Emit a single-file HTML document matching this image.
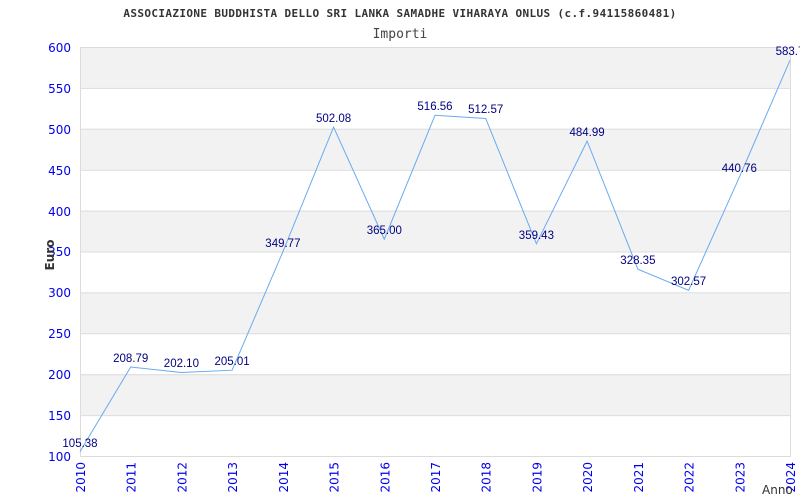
<!DOCTYPE html>
<html><head><meta charset="utf-8"><style>
html,body{margin:0;padding:0;background:#fff;width:800px;height:500px;overflow:hidden}
</style></head><body>
<svg width="800" height="500" xmlns="http://www.w3.org/2000/svg">
<g fill="#f2f2f2">
<rect x="80" y="47" width="710" height="40.9"/>
<rect x="80" y="128.8" width="710" height="40.9"/>
<rect x="80" y="210.6" width="710" height="40.9"/>
<rect x="80" y="292.4" width="710" height="40.9"/>
<rect x="80" y="374.2" width="710" height="40.9"/>
</g>
<g stroke="#dcdcdc" stroke-width="1">
<line x1="80" y1="47.5" x2="790" y2="47.5"/>
<line x1="80" y1="88.4" x2="790" y2="88.4"/>
<line x1="80" y1="129.3" x2="790" y2="129.3"/>
<line x1="80" y1="170.2" x2="790" y2="170.2"/>
<line x1="80" y1="211.1" x2="790" y2="211.1"/>
<line x1="80" y1="252" x2="790" y2="252"/>
<line x1="80" y1="292.9" x2="790" y2="292.9"/>
<line x1="80" y1="333.8" x2="790" y2="333.8"/>
<line x1="80" y1="374.7" x2="790" y2="374.7"/>
<line x1="80" y1="415.6" x2="790" y2="415.6"/>
<line x1="80" y1="456.5" x2="790" y2="456.5"/>
<line x1="80.5" y1="47" x2="80.5" y2="457"/>
<line x1="790.5" y1="47" x2="790.5" y2="457"/>
</g>
<g font-family="'DejaVu Sans Mono','Liberation Mono',monospace" text-anchor="middle">
<text x="400" y="17" font-size="11" font-weight="bold" fill="#333" letter-spacing="0.38">ASSOCIAZIONE BUDDHISTA DELLO SRI LANKA SAMADHE VIHARAYA ONLUS (c.f.94115860481)</text>
<text x="400" y="38" font-size="13" fill="#444">Importi</text>
</g>
<g font-family="'DejaVu Sans',sans-serif" font-size="12" fill="#0000ee" text-anchor="end">
<text x="71" y="52">600</text><text x="71" y="93">550</text><text x="71" y="134">500</text>
<text x="71" y="175">450</text><text x="71" y="216">400</text><text x="71" y="256">350</text>
<text x="71" y="297">300</text><text x="71" y="338">250</text><text x="71" y="379">200</text>
<text x="71" y="420">150</text><text x="71" y="461">100</text>
</g>
<g font-family="'DejaVu Sans',sans-serif" font-size="12" fill="#0000ee" text-anchor="end">
<text transform="translate(85,462) rotate(-90)">2010</text>
<text transform="translate(135.7,462) rotate(-90)">2011</text>
<text transform="translate(186.4,462) rotate(-90)">2012</text>
<text transform="translate(237.1,462) rotate(-90)">2013</text>
<text transform="translate(287.9,462) rotate(-90)">2014</text>
<text transform="translate(338.6,462) rotate(-90)">2015</text>
<text transform="translate(389.3,462) rotate(-90)">2016</text>
<text transform="translate(440,462) rotate(-90)">2017</text>
<text transform="translate(490.7,462) rotate(-90)">2018</text>
<text transform="translate(541.4,462) rotate(-90)">2019</text>
<text transform="translate(592.1,462) rotate(-90)">2020</text>
<text transform="translate(642.9,462) rotate(-90)">2021</text>
<text transform="translate(693.6,462) rotate(-90)">2022</text>
<text transform="translate(744.3,462) rotate(-90)">2023</text>
<text transform="translate(795,462) rotate(-90)">2024</text>
</g>
<text transform="translate(54,255) rotate(-90)" text-anchor="middle" font-family="'DejaVu Sans',sans-serif" font-size="12" font-weight="bold" fill="#333">Euro</text>
<text x="762" y="494" font-family="'DejaVu Sans',sans-serif" font-size="12" fill="#333">Anno</text>
<polyline fill="none" stroke="#6aaaf0" stroke-width="1" points="80,451.6 130.7,367 181.4,372.5 232.1,370.2 282.9,251.7 333.6,127.1 384.3,239.2 435,115.3 485.7,118.5 536.4,243.8 587.1,141.1 637.9,269.2 688.6,290.3 739.3,177.3 790,60.3"/>
<g font-family="'Liberation Sans',Arial,sans-serif" font-size="11.5" fill="#000080" text-anchor="middle">
<text x="80" y="447">105.38</text>
<text x="130.7" y="362">208.79</text>
<text x="181.4" y="367">202.10</text>
<text x="232.1" y="365">205.01</text>
<text x="282.9" y="247">349.77</text>
<text x="333.6" y="122">502.08</text>
<text x="384.3" y="234">365.00</text>
<text x="435" y="110">516.56</text>
<text x="485.7" y="113">512.57</text>
<text x="536.4" y="239">359.43</text>
<text x="587.1" y="136">484.99</text>
<text x="637.9" y="264">328.35</text>
<text x="688.6" y="285">302.57</text>
<text x="739.3" y="172">440.76</text>
<text x="790" y="55">583.7</text>
</g>
</svg>
</body></html>
